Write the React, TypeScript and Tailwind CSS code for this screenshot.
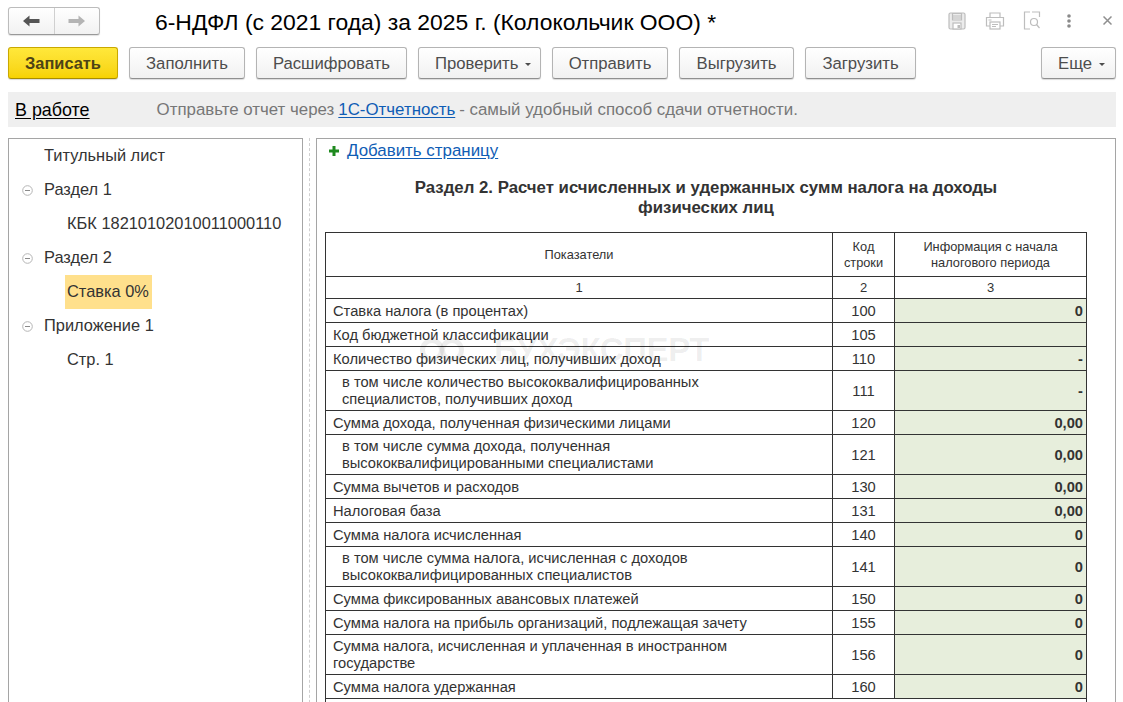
const rows: { label: string[]; code: string; value: string; indent?: boolean; height: string }[] = [
  { label: ['Ставка налога (в процентах)'], code: '100', value: '0', height: 'h-6' },
  { label: ['Код бюджетной классификации'], code: '105', value: '', height: 'h-6' },
  { label: ['Количество физических лиц, получивших доход'], code: '110', value: '-', height: 'h-6' },
  { label: ['в том числе количество высококвалифицированных', 'специалистов, получивших доход'], code: '111', value: '-', indent: true, height: 'h-10' },
  { label: ['Сумма дохода, полученная физическими лицами'], code: '120', value: '0,00', height: 'h-6' },
  { label: ['в том числе сумма дохода, полученная', 'высококвалифицированными специалистами'], code: '121', value: '0,00', indent: true, height: 'h-10' },
  { label: ['Сумма вычетов и расходов'], code: '130', value: '0,00', height: 'h-6' },
  { label: ['Налоговая база'], code: '131', value: '0,00', height: 'h-6' },
  { label: ['Сумма налога исчисленная'], code: '140', value: '0', height: 'h-6' },
  { label: ['в том числе сумма налога, исчисленная с доходов', 'высококвалифицированных специалистов'], code: '141', value: '0', indent: true, height: 'h-10' },
  { label: ['Сумма фиксированных авансовых платежей'], code: '150', value: '0', height: 'h-6' },
  { label: ['Сумма налога на прибыль организаций, подлежащая зачету'], code: '155', value: '0', height: 'h-6' },
  { label: ['Сумма налога, исчисленная и уплаченная в иностранном', 'государстве'], code: '156', value: '0', height: 'h-10' },
  { label: ['Сумма налога удержанная'], code: '160', value: '0', height: 'h-6' },
];

function ToolButton({ label, width, menu }: { label: string; width: string; menu?: boolean }) {
  return (
    <button className={`${width} flex h-8 items-center ${menu ? 'justify-start gap-[7px] pl-4' : 'justify-center'} rounded-[3px] border border-[#b4b4b4] border-b-[#8f8f8f] bg-gradient-to-b from-white to-[#f1f1f1] pt-px text-[16.7px] text-[#4d4d4d] shadow-[0_1px_1px_rgba(0,0,0,0.15)]`}>
      {label}
      {menu && <span className="mt-[2px] h-0 w-0 border-x-[3px] border-t-[3px] border-x-transparent border-t-[#4d4d4d]" />}
    </button>
  );
}

function TreeRow({ label, level, collapsible, selected }: { label: string; level: number; collapsible?: boolean; selected?: boolean }) {
  return (
    <div className="flex h-[34px] items-center text-[16.4px] text-[#333]">
      <div className="flex w-[35px] shrink-0 justify-end pr-[11px]">
        {collapsible && (
          <svg width="11" height="11" viewBox="0 0 11 11">
            <circle cx="5.5" cy="5.5" r="4.8" fill="none" stroke="#b5b5b5" />
            <path d="M3 5.5h5" stroke="#8a8a8a" />
          </svg>
        )}
      </div>
      {level === 1 ? (
        <div className={`ml-[21px] flex h-[34px] items-center pb-[2px] pl-[2px] pr-[3px] ${selected ? 'bg-[#ffe08c]' : ''}`}>{label}</div>
      ) : (
        <div className="pb-[2px]">{label}</div>
      )}
    </div>
  );
}

export default function App() {
  return (
    <div className="relative h-[702px] w-[1123px] overflow-hidden bg-white font-['Liberation_Sans',Arial,sans-serif]">
      {/* Title row */}
      <div className="flex h-[47px] items-start pl-2 pr-[11px] pt-[7px]">
        <div className="flex h-[28px] w-[92px] rounded-[3px] border border-[#bcbcbc] border-b-[#999] bg-gradient-to-b from-white to-[#f2f2f2] shadow-[0_1px_1px_rgba(0,0,0,0.12)]">
          <div className="flex w-[46px] items-center justify-center border-r border-[#d0d0d0]">
            <svg width="17" height="12" viewBox="0 0 17 12"><path d="M0 6l6.500-5.500v3.500h10v4h-10v3.500z" fill="#555" /></svg>
          </div>
          <div className="flex flex-1 items-center justify-center pr-[2px]">
            <svg width="17" height="12" viewBox="0 0 17 12"><path d="M17 6l-6.500-5.500v3.500h-10v4h10v3.500z" fill="#b4b4b4" /></svg>
          </div>
        </div>
        <h1 className="ml-[55px] mt-[1px] text-[22.9px] leading-[28px] text-black">6-НДФЛ (с 2021 года) за 2025 г. (Колокольчик ООО) *</h1>
        <div className="ml-auto flex items-center pt-[4px]">
          <svg width="18" height="18" viewBox="0 0 18 18" fill="none" stroke="#bdbdbd" strokeWidth="1.2">
            <rect x="1" y="1" width="16" height="16" rx="1.500" fill="#ececec" />
            <path d="M4.500 1.500h9v6.500h-9zM4.500 4h9M4.500 6h9" />
            <rect x="5" y="11" width="8" height="6" fill="#fff" />
            <rect x="9.500" y="13" width="2.500" height="3" fill="#bdbdbd" stroke="none" />
          </svg>
          <svg className="ml-[19px]" width="20" height="18" viewBox="0 0 20 18" fill="none" stroke="#bdbdbd" strokeWidth="1.200">
            <path d="M5 5V1h10v4M5 14H1.500V5.500h17V14H15" />
            <rect x="5" y="10" width="10" height="7" fill="#fff" />
            <path d="M7 12.500h6M7 14.500h4M3.500 8h3" />
          </svg>
          <svg className="ml-[18px]" width="18" height="19" viewBox="0 0 18 19" fill="none" stroke="#bdbdbd" strokeWidth="1.200">
            <path d="M7 1H1.500v17H7M9 1h7.500v5" />
            <circle cx="11" cy="11" r="3.500" />
            <path d="M13.500 13.500l3 3.500" />
          </svg>
          <svg className="ml-[26px]" width="4" height="14" viewBox="0 0 4 14" fill="#8a8a8a">
            <circle cx="2" cy="2" r="1.800" />
            <circle cx="2" cy="7" r="1.800" />
            <circle cx="2" cy="12" r="1.800" />
          </svg>
          <svg className="ml-[32px]" width="9" height="9" viewBox="0 0 9 9" stroke="#8f8f8f" strokeWidth="1.500"><path d="M.5.5l8 8M8.500.5l-8 8" /></svg>
        </div>
      </div>

      {/* Command bar */}
      <div className="flex h-8 gap-[11px] pl-2 pr-[7px]">
        <button className="flex h-8 w-[110px] items-center justify-center rounded-[3px] border border-[#c9a800] border-b-[#a88c00] bg-gradient-to-b from-[#ffe83a] to-[#f7d200] pt-px text-[16.4px] font-bold text-[#4d4316] shadow-[0_1px_1px_rgba(0,0,0,0.15)]">
          Записать
        </button>
        <ToolButton label="Заполнить" width="w-[116px]" />
        <ToolButton label="Расшифровать" width="w-[151px]" />
        <ToolButton label="Проверить" width="w-[123px]" menu />
        <ToolButton label="Отправить" width="w-[116px]" />
        <ToolButton label="Выгрузить" width="w-[115px]" />
        <ToolButton label="Загрузить" width="w-[111px]" />
        <div className="ml-auto">
          <ToolButton label="Еще" width="w-[75px]" menu />
        </div>
      </div>

      {/* Status line */}
      <div className="mx-2 mt-[13px] flex h-[35px] w-[1108px] items-center bg-[#efefef] pl-[7px] text-[16.87px]">
        <a className="pt-px text-[17.9px] text-black underline underline-offset-2">В работе</a>
        <span className="ml-[67px] text-[#777]">Отправьте отчет через</span>
        <a className="ml-[4px] text-[#0f5db5] underline underline-offset-2">1С-Отчетность</a>
        <span className="ml-[4px] text-[#777]">- самый удобный способ сдачи отчетности.</span>
      </div>

      {/* Body */}
      <div className="mt-[11px] flex px-2">
        <div className="h-[600px] w-[295px] shrink-0 border border-[#a5a5a5] pl-0">
          <TreeRow label="Титульный лист" level={0} />
          <TreeRow label="Раздел 1" level={0} collapsible />
          <TreeRow label="КБК 18210102010011000110" level={1} />
          <TreeRow label="Раздел 2" level={0} collapsible />
          <TreeRow label="Ставка 0%" level={1} selected />
          <TreeRow label="Приложение 1" level={0} collapsible />
          <TreeRow label="Стр. 1" level={1} />
        </div>
        <div className="mx-[6px] h-[600px] w-0 shrink-0 border-l border-dashed border-[#cfcfcf]" />
        <div className="relative h-[600px] w-[800px] shrink-0 border border-[#a5a5a5] pl-2">
          <div className="flex h-[24px] items-center pl-1">
            <svg width="10" height="10" viewBox="0 0 10 10"><path d="M3.500 0h3v3.500H10v3H6.500V10h-3V6.500H0v-3h3.500z" fill="#1f8a1f" /></svg>
            <a className="ml-2 text-[16.9px] text-[#0f5db5] underline underline-offset-2">Добавить страницу</a>
          </div>
          <div className="ml-[50px] mt-[15px] w-[662px] text-center text-[16.8px] font-bold leading-[20px] text-[#333]">
            <div>Раздел 2. Расчет исчисленных и удержанных сумм налога на доходы</div>
            <div>физических лиц</div>
          </div>
          <table className="mt-[14px] w-[761px] table-fixed border-collapse border border-[#333] text-[14.7px] leading-[17px] text-[#333]">
            <colgroup>
              <col className="w-[507px]" />
              <col className="w-[62px]" />
              <col className="w-[192px]" />
            </colgroup>
            <thead>
              <tr className="h-11 text-[12.8px] leading-[16px]">
                <th className="border border-[#333] font-normal">Показатели</th>
                <th className="border border-[#333] font-normal">Код<br />строки</th>
                <th className="border border-[#333] font-normal">Информация с начала<br />налогового периода</th>
              </tr>
              <tr className="h-[22px] text-[13px]">
                <th className="border border-[#333] font-normal">1</th>
                <th className="border border-[#333] font-normal">2</th>
                <th className="border border-[#333] font-normal">3</th>
              </tr>
            </thead>
            <tbody>
              {rows.map((row) => (
                <tr key={row.code} className={row.height}>
                  <td className={`border border-[#333] pb-0 pr-2 ${row.label.length === 1 ? 'pt-[2px]' : 'pt-0'} ${row.indent ? 'pl-4' : 'pl-[7px]'}`}>
                    {row.label.map((line) => (
                      <div key={line}>{line}</div>
                    ))}
                  </td>
                  <td className="border border-[#333] pt-[2px] text-center">{row.code}</td>
                  <td className="border border-[#333] bg-[#e7eedc] pr-[3px] pt-[2px] text-right font-bold">{row.value}</td>
                </tr>
              ))}
              <tr className="h-6">
                <td className="border border-[#333]" colSpan={3} />
              </tr>
            </tbody>
          </table>
        </div>
      </div>

      {/* Watermark over the table */}
      <div className="pointer-events-none absolute left-[420px] top-[333px] flex items-center gap-[30px] text-[33px] font-bold leading-[34px] tracking-[-0.400px] text-black/[0.07]">
        <svg width="44" height="26" viewBox="0 0 44 26" fill="none" stroke="currentColor" strokeWidth="5">
          <circle cx="12" cy="13" r="9.500" />
          <circle cx="32" cy="13" r="9.500" />
        </svg>
        <span>БУХЭКСПЕРТ</span>
      </div>
    </div>
  );
}
